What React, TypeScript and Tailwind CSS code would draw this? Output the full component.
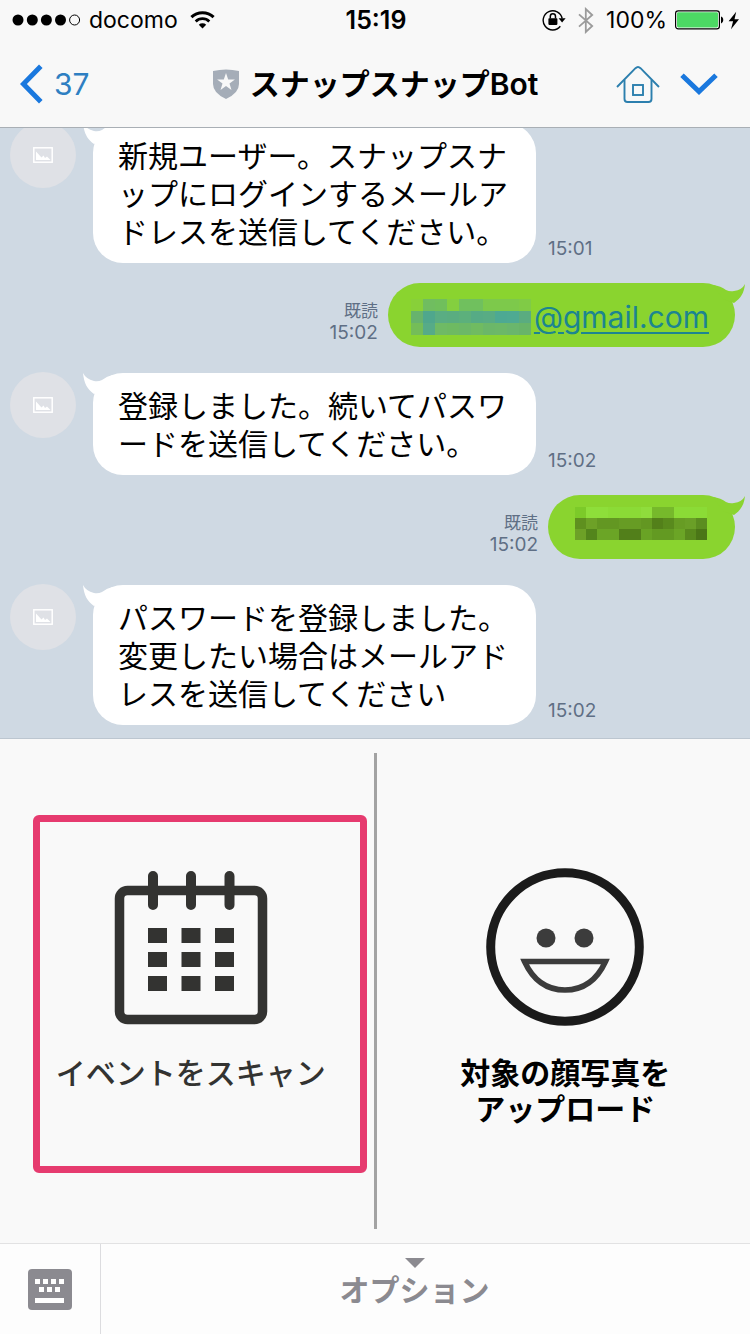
import type { ReactNode } from "react";

const SANS = "font-['Inter','Noto_Sans_CJK_JP',sans-serif]";

function StatusBar() {
  return (
    <div className="grid h-10 grid-cols-[1fr_auto_1fr] items-center pr-2.5 pl-3 text-[23px] leading-7 text-black">
      <div className="flex items-center gap-2">
        <svg width="69" height="12" viewBox="0 0 69 12" aria-label="電波強度">
          <circle cx="6" cy="6" r="5.5" />
          <circle cx="20.3" cy="6" r="5.5" />
          <circle cx="34.4" cy="6" r="5.5" />
          <circle cx="48.5" cy="6" r="5.5" />
          <circle cx="62.6" cy="6" r="5" fill="none" stroke="#000" />
        </svg>
        <span>docomo</span>
        <svg className="ml-1" width="25" height="18" viewBox="0 0 25 18" aria-label="Wi-Fi">
          <path d="M1.4 6.2a16 16 0 0 1 22.2 0" fill="none" stroke="#000" strokeWidth="3" />
          <path d="M5.7 10.4a9.8 9.8 0 0 1 13.6 0" fill="none" stroke="#000" strokeWidth="2.8" />
          <path d="M8.8 13.7a5.4 5.4 0 0 1 7.4 0L12.5 17.6z" />
        </svg>
      </div>
      <time className="text-[25px] font-semibold">15:19</time>
      <div className="flex items-center justify-end">
        <svg width="24" height="22" viewBox="0 0 24 22" aria-label="画面の向きをロック">
          <path d="M18.3 17.3A9.6 9.6 0 1 1 20.2 9.5" fill="none" stroke="#000" strokeWidth="1.4" />
          <path d="M16.6 9.3h7l-3.5 4.2z" />
          <rect x="6.4" y="9.3" width="9" height="6.6" rx=".8" />
          <path d="M8.3 9.6V7.4a2.6 2.6 0 0 1 5.2 0v2.2" fill="none" stroke="#000" strokeWidth="1.5" />
        </svg>
        <svg className="ml-3" width="16" height="27" viewBox="0 0 16 27" aria-label="Bluetooth">
          <path d="M1 7.4 14.2 19 7.8 25V2l6.4 6L1 19.6" fill="none" stroke="#9b9b9b" strokeWidth="1.8" />
        </svg>
        <span className="ml-3">100%</span>
        <svg className="ml-2" width="49" height="20" viewBox="0 0 49 20" aria-label="バッテリー">
          <rect x=".6" y=".9" width="43.8" height="18" rx="2.6" fill="#fff" stroke="#000" strokeWidth="1.2" />
          <rect x="2" y="2.3" width="41" height="15.2" rx="1.4" fill="#4cd964" />
          <path d="M46 6.6c3 1 3 5.8 0 6.8z" />
        </svg>
        <svg className="ml-1" width="12" height="19" viewBox="0 0 12 19" aria-label="充電中">
          <path d="M8.2.8.6 10.3h4.5L3 18.2l8-9.9H6.5z" />
        </svg>
      </div>
    </div>
  );
}

function NavBar() {
  return (
    <nav className="grid h-[87px] grid-cols-[1fr_auto_1fr] items-center px-5">
      <button className="flex items-center gap-2.5 justify-self-start text-[30px] leading-9 text-[#2e7fc2]">
        <svg width="24" height="40" viewBox="0 0 24 40" aria-hidden="true">
          <path d="M20.8 2.2 3.4 20l17.4 17.8" fill="none" stroke="#1a78de" strokeWidth="5" />
        </svg>
        37
      </button>
      <h1 className="flex items-center gap-2.5 text-[30px] leading-9 font-semibold text-black">
        <svg width="28" height="30" viewBox="0 0 28 30" aria-hidden="true">
          <path d="M1 2Q14-1 27 2V15q0 9-13 15Q1 24 1 15z" fill="#a5adb8" />
          <path d="m14 4 2.2 6.4h6.7l-5.4 4 2 6.500L14 17l-5.5 3.9 2-6.5-5.4-4h6.7z" fill="#f8f8f8" />
        </svg>
        スナップスナップBot
      </h1>
      <div className="mr-3 flex items-center gap-5 justify-self-end">
        <button aria-label="ホーム">
          <svg width="44" height="40" viewBox="0 0 44 40" fill="none" stroke="#2c7fae" strokeWidth="1.9" className="block">
            <path d="M1 23 19.5 4.2q2.5-2.400 5 0L43 23" />
            <path d="M8.5 16v19q0 3 3 3h21q3 0 3-3V16" />
            <rect x="17" y="21" width="10" height="10" />
          </svg>
        </button>
        <button aria-label="メニューを開く">
          <svg width="38" height="24" viewBox="0 0 38 24" className="block">
            <path d="M2 3.2 19 19.6 36 3.2" fill="none" stroke="#1a78de" strokeWidth="5" />
          </svg>
        </button>
      </div>
    </nav>
  );
}

function Received({ time, children }: { time: string; children: ReactNode }) {
  return (
    <li className="mt-1.5 flex items-start pl-2.5">
      <div className="-mt-px flex size-[66px] shrink-0 items-center justify-center rounded-full bg-[#dfe1e6]">
        <svg width="20" height="16" viewBox="0 0 20 16" aria-hidden="true">
          <rect x=".8" y=".8" width="18.4" height="14.4" fill="none" stroke="#fff" strokeWidth="1.5" />
          <path d="M3 13V4.5l5.5 6 2-2L12 11l2-1.5 3.5 3.5z" fill="#fff" />
        </svg>
      </div>
      <div className="relative ml-[17px] max-w-[443px] rounded-[30px] bg-white pt-3.5 pr-[23px] pb-3 pl-[25px] text-[30px] leading-[38px] text-black [line-break:anywhere]">
        <svg className="absolute top-0 -left-2.5" width="36" height="24" viewBox="0 0 36 24" aria-hidden="true">
          <path d="M0 0C1 10 4 16 11 21L22 16L30 2Q24 3 19 7Q15 9 11 8Q3 6 0 0Z" fill="#fff" />
        </svg>
        <p className="relative">{children}</p>
      </div>
      <time className="mb-[3px] ml-3 self-end text-[19px] leading-[22px] text-[#5f6f85]">{time}</time>
    </li>
  );
}

function Sent({ time, children }: { time: string; children: ReactNode }) {
  return (
    <li className="flex items-end justify-end pr-[15px]">
      <div className="mr-2.5 mb-[3px] flex flex-col items-end text-[19px] leading-[22px] text-[#5f6f85]">
        <span className="text-[17px]">既読</span>
        <time>{time}</time>
      </div>
      <div className="relative flex h-16 items-center rounded-full bg-[#8ad42f]">
        <svg className="absolute top-0 -right-2.5" width="36" height="24" viewBox="0 0 36 24" aria-hidden="true">
          <path d="M36 1C35 10 32 15 25 20L14 16L4 2Q12 3 17 7Q21 9 25 8Q33 7 36 1Z" fill="#8ad42f" />
        </svg>
        {children}
      </div>
    </li>
  );
}

const MAIL_MOSAIC = [
  ["#88d039", "#70bd60", "#70bf5c", "#84cf3f", "#70c05e", "#70c05e", "#7dc94b", "#7dc94b", "#7dc94b", "#80cb46"],
  ["#67b36d", "#4fa78d", "#5aad83", "#5aad80", "#5cb07c", "#56ab85", "#58ac84", "#4da993", "#4eaa92", "#5aac80"],
  ["#74bd58", "#56ab88", "#6fba65", "#6eba62", "#6cb867", "#70bb61", "#6bb769", "#6cb868", "#6ab66c", "#68b469"],
];

const PASS_MOSAIC = [
  ["#7cca29", "#8ede3a", "#8ede3a", "#8bdb36", "#8bdb36", "#8bdb36", "#8fdd3c", "#76b92b", "#76b92b", "#8bdb36", "#8bdb36", "#8bdb36"],
  ["#5f901f", "#6da127", "#639722", "#639722", "#679c24", "#679c24", "#639722", "#53801a", "#598a1d", "#679c24", "#6a9f27", "#5b8d20"],
  ["#6da127", "#53851c", "#6ba526", "#6ba526", "#527f1a", "#527f1a", "#69a325", "#639a22", "#639a22", "#6ba526", "#598a1d", "#4b7617"],
];

function Mosaic({ rows, cellWidth, cellHeight }: { rows: string[][]; cellWidth: number; cellHeight: number }) {
  const width = rows[0].length * cellWidth;
  const height = rows.length * cellHeight;
  return (
    <svg width={width} height={height} viewBox={`0 0 ${width} ${height}`} shapeRendering="crispEdges" aria-hidden="true">
      {rows.map((row, y) =>
        row.map((fill, x) => (
          <rect key={`${x}-${y}`} x={x * cellWidth} y={y * cellHeight} width={cellWidth} height={cellHeight} fill={fill} />
        )),
      )}
    </svg>
  );
}

function CalendarIcon() {
  const columns = [34, 67.5, 101];
  const rows = [60, 84, 108];
  return (
    <svg width="154" height="158" viewBox="0 0 154 158" aria-hidden="true">
      <rect x="5.5" y="22.5" width="143" height="129" rx="8" fill="none" stroke="#333331" strokeWidth="9.5" />
      <path d="M39 8v29M77 8v29M115.5 8v29" stroke="#333331" strokeWidth="10" strokeLinecap="round" />
      {rows.map((y) => columns.map((x) => <rect key={`${x}-${y}`} x={x} y={y} width="19" height="15" fill="#333331" />))}
    </svg>
  );
}

function SmileIcon() {
  return (
    <svg width="158" height="158" viewBox="0 0 158 158" aria-hidden="true">
      <circle cx="79" cy="79" r="74.3" fill="none" stroke="#1b1b1b" strokeWidth="9" />
      <circle cx="60" cy="70" r="9.5" fill="#3c3c3c" />
      <circle cx="98" cy="70" r="9.5" fill="#3c3c3c" />
      <path d="M38.5 93.5h81C111 112 97 122 79 122S47 112 38.5 93.5Z" fill="none" stroke="#3c3c3c" strokeWidth="5.5" />
    </svg>
  );
}

export default function App() {
  return (
    <div className={`flex h-screen flex-col overflow-hidden bg-[#f9f9f9] ${SANS}`} lang="ja">
      <header className="shrink-0 border-b border-[#a9afb5] bg-[#f8f8f8]">
        <StatusBar />
        <NavBar />
      </header>

      <main className="flex min-h-0 flex-1 flex-col justify-end overflow-hidden bg-[#cfd9e3]">
        <ul className="flex flex-col gap-5 pb-[13px]">
          <Received time="15:01">新規ユーザー。スナップスナップにログインするメールアドレスを送信してください。</Received>
          <Sent time="15:02">
            <div className="flex items-center gap-[3px] pt-1 pr-[26px] pl-[23px]">
              <Mosaic rows={MAIL_MOSAIC} cellWidth={12} cellHeight={12} />
              <a href="mailto:" className="text-[30px] leading-[38px] text-[#1c8590] underline decoration-2 underline-offset-4">
                @gmail.com
              </a>
            </div>
          </Sent>
          <Received time="15:02">登録しました。続いてパスワードを送信してください。</Received>
          <Sent time="15:02">
            <div className="pr-7 pb-2 pl-[27px]">
              <Mosaic rows={PASS_MOSAIC} cellWidth={11} cellHeight={11} />
            </div>
          </Sent>
          <Received time="15:02">パスワードを登録しました。変更したい場合はメールアドレスを送信してください</Received>
        </ul>
      </main>

      <section className="grid h-[505px] shrink-0 grid-cols-[1fr_3px_1fr] border-t border-[#bcc6d0]">
        <button className="relative flex flex-col items-center justify-start gap-[29px] pt-[129px] pl-2 text-[30px] leading-9 font-medium text-[#333331]">
          <CalendarIcon />
          <span>イベントをスキャン</span>
          <span className="absolute top-[76px] right-[7px] bottom-[70px] left-[33px] rounded-md border-[7px] border-[#e63b6f]" />
        </button>
        <div className="my-3.5 bg-[#a3a3a3]" />
        <button className="flex flex-col items-center justify-start gap-[29px] pt-[129px] pl-1 text-[30px] leading-9 font-bold text-black">
          <SmileIcon />
          <span>
            対象の顔写真を
            <br />
            アップロード
          </span>
        </button>
      </section>

      <footer className="flex h-[91px] shrink-0 border-t border-[#e2e2e3] bg-[#fdfdfd]">
        <button aria-label="キーボード" className="flex w-[101px] items-center justify-center border-r border-[#dcdcdf]">
          <svg width="44" height="41" viewBox="0 0 44 41" aria-hidden="true">
            <rect width="44" height="41" rx="4" fill="#8b8a90" />
            <path
              d="M7 10h5v5H7zM15 10h5v5h-5zM23 10h5v5h-5zM31 10h5v5h-5zM11 18h5v5h-5zM19 18h5v5h-5zM27 18h5v5h-5zM7 29h29v5H7z"
              fill="#fff"
            />
          </svg>
        </button>
        <button className="flex flex-1 flex-col items-center pt-3.5 pr-[22px] text-[30px] leading-[44px] font-bold text-[#8b8a90]">
          <svg width="20" height="10" viewBox="0 0 20 10" aria-hidden="true">
            <path d="M0 0h20L10 10z" fill="#8b8a90" />
          </svg>
          オプション
        </button>
      </footer>
    </div>
  );
}
